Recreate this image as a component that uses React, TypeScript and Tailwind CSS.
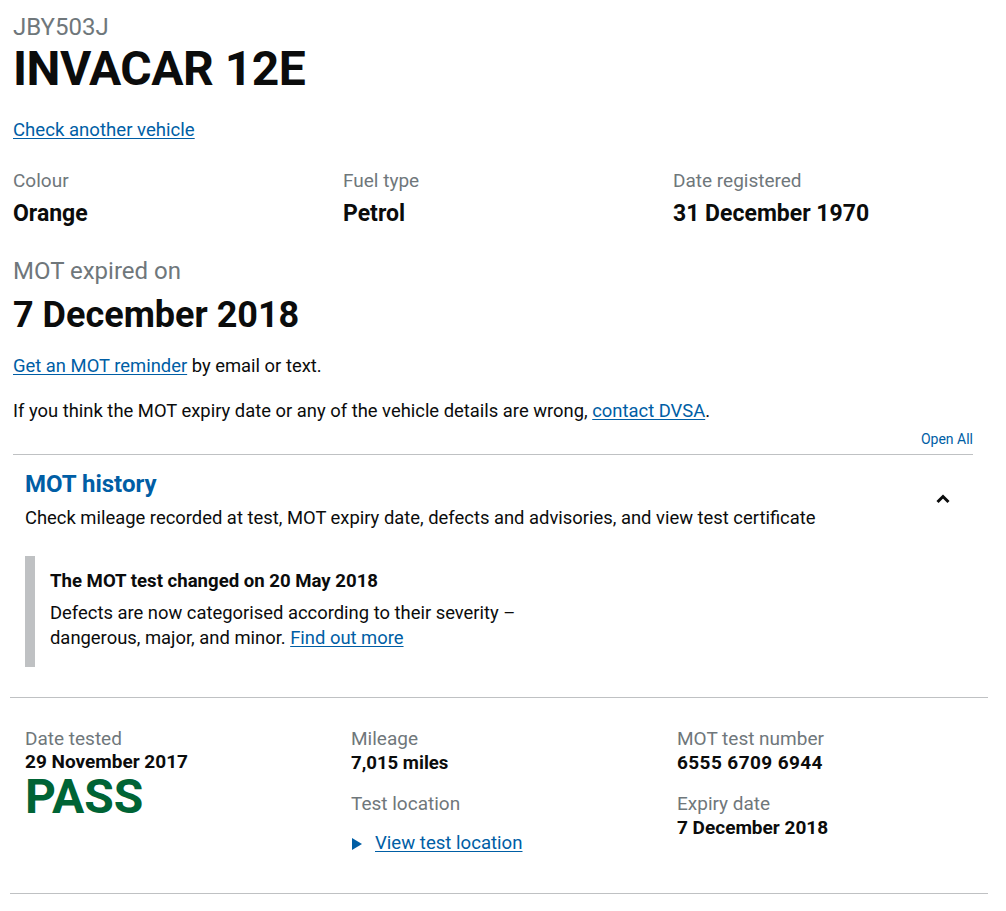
import React from 'react';

const font = { fontFamily: 'Roboto, "Liberation Sans", Arial, sans-serif' };

function Label({ children }: { children: React.ReactNode }) {
  return <p className="text-[19px] leading-[25px] text-[#6f777b]">{children}</p>;
}

export default function App() {
  return (
    <div className="bg-white text-[#0b0c0c] w-[1006px] min-h-[911px]" style={font}>
      <div className="px-[13px] pt-[12px] w-[986px]">
        {/* Vehicle header */}
        <p className="text-[24px] leading-[30px] text-[#6f777b]">JBY503J</p>
        <h1 className="mt-[2px] text-[48px] leading-[50px] font-bold tracking-[-0.5px]">INVACAR 12E</h1>
        <p className="mt-[24px] text-[18.6px] leading-[25px]">
          <a href="#" className="text-[#005ea5] underline underline-offset-2">Check another vehicle</a>
        </p>

        {/* Vehicle details */}
        <div className="grid grid-cols-[330px_330px_300px] mt-[25px]">
          <div>
            <Label>Colour</Label>
            <p className="mt-[7px] text-[23px] leading-[28px] font-bold">Orange</p>
          </div>
          <div>
            <Label>Fuel type</Label>
            <p className="mt-[7px] text-[23px] leading-[28px] font-bold">Petrol</p>
          </div>
          <div>
            <Label>Date registered</Label>
            <p className="mt-[7px] text-[23px] leading-[28px] font-bold">31 December 1970</p>
          </div>
        </div>

        <p className="mt-[28px] text-[24px] leading-[30px] text-[#6f777b]">MOT expired on</p>
        <p className="mt-[9px] text-[36px] leading-[40px] font-bold">7 December 2018</p>

        <p className="mt-[18px] text-[18.4px] leading-[25px]">
          <a href="#" className="text-[#005ea5] underline underline-offset-2">Get an MOT reminder</a> by email or text.
        </p>
        <p className="mt-[20px] text-[18.4px] leading-[25px]">
          If you think the MOT expiry date or any of the vehicle details are wrong,{' '}
          <a href="#" className="text-[#005ea5] underline underline-offset-2">contact DVSA</a>.
        </p>
        <div className="flex justify-end mt-[6px]">
          <a href="#" className="text-[14px] leading-[20px] text-[#005ea5]">Open All</a>
        </div>
      </div>

      {/* Accordion */}
      <div className="mx-[13px] w-[960px] mt-[5px] border-t border-[#bfc1c3]">
        <div className="flex items-start justify-between pl-[12px] pt-[14px]">
          <div>
            <h2 className="text-[24px] leading-[30px] font-bold text-[#005ea5]">MOT history</h2>
            <p className="mt-[6px] text-[18.4px] leading-[25px]">
              Check mileage recorded at test, MOT expiry date, defects and advisories, and view test certificate
            </p>
          </div>
          <svg width="16" height="11" viewBox="0 0 16 11" className="mt-[24px] mr-[22px]">
            <path d="M2.5 9 L8 3.5 L13.5 9" fill="none" stroke="#0b0c0c" strokeWidth="3" />
          </svg>
        </div>
        <div className="ml-[12px] mt-[26px] border-l-[10px] border-[#bfc1c3] pl-[15px] pt-[13px] pb-[17px] w-[560px]">
          <p className="text-[18.6px] leading-[25px] font-bold">The MOT test changed on 20 May 2018</p>
          <p className="mt-[6px] text-[18.4px] leading-[25px]">
            Defects are now categorised according to their severity –<br />
            dangerous, major, and minor.{' '}
            <a href="#" className="text-[#005ea5] underline underline-offset-2">Find out more</a>
          </p>
        </div>
      </div>

      {/* Test result */}
      <div className="mx-[10px] w-[978px] mt-[30px] border-t border-b border-[#bfc1c3] pt-[28px] pb-[37px]">
        <div className="grid grid-cols-3">
          <div className="pl-[15px]">
            <Label>Date tested</Label>
            <p className="text-[19px] leading-[22px] font-bold">29 November 2017</p>
            <p className="mt-[2px] text-[48px] leading-[44px] font-bold text-[#006435]">PASS</p>
          </div>
          <div className="pl-[15px]">
            <Label>Mileage</Label>
            <p className="text-[18.6px] leading-[24px] font-bold">7,015 miles</p>
            <div className="mt-[16px]">
              <Label>Test location</Label>
            </div>
            <div className="mt-[15px] flex items-center gap-[12px]">
              <svg width="12" height="12" viewBox="0 0 12 12">
                <path d="M1 0 L11 6 L1 12 Z" fill="#005ea5" />
              </svg>
              <a href="#" className="text-[18.6px] leading-[25px] text-[#005ea5] underline underline-offset-2">View test location</a>
            </div>
          </div>
          <div className="pl-[15px]">
            <Label>MOT test number</Label>
            <p className="text-[19px] leading-[24px] font-bold tracking-[0.4px]">6555 6709 6944</p>
            <div className="mt-[16px]">
              <Label>Expiry date</Label>
            </div>
            <p className="text-[19px] leading-[24px] font-bold">7 December 2018</p>
          </div>
        </div>
      </div>
    </div>
  );
}
